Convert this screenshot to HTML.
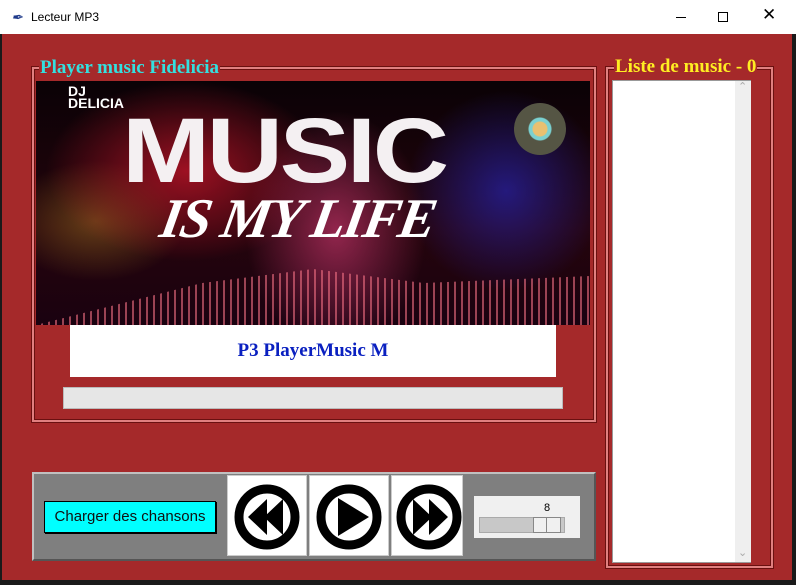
<!DOCTYPE html>
<html><head><meta charset="utf-8"><style>
*{margin:0;padding:0;box-sizing:border-box}
body{width:796px;height:585px;background:#1a1a1a;position:relative;overflow:hidden;font-family:"Liberation Sans",sans-serif}
.a{position:absolute}
.ridge{border:2px solid #e08080;box-shadow:inset 0 0 0 1px #6a1010, 0 0 0 1px #6a1010}
</style></head><body>
<div class="a" style="left:0;top:0;width:796px;height:34px;background:#fff"></div>
<div class="a" style="left:11px;top:9px;font-size:14px;color:#1e3a8a;font-style:italic">&#x2712;</div>
<div class="a" style="left:31px;top:10px;font-size:12px;color:#000">Lecteur MP3</div>
<div class="a" style="left:676px;top:17px;width:10px;height:1px;background:#000"></div>
<div class="a" style="left:718px;top:12px;width:10px;height:10px;border:1px solid #000"></div>
<div class="a" style="left:762px;top:5px;font-size:17px;color:#000">&#x2715;</div>
<div class="a" style="left:2px;top:34px;width:790px;height:546px;background:#a5292a"></div>

<!-- left frame -->
<div class="a ridge" style="left:32px;top:67px;width:564px;height:355px"></div>
<div class="a" style="left:39px;top:57px;padding:0 1px;background:#a5292a;color:#33e0e0;font:bold 19px 'Liberation Serif',serif">Player music Fidelicia</div>
<div class="a" style="left:36px;top:81px;width:554px;height:244px;overflow:hidden;background:
radial-gradient(ellipse 90px 120px at 300px 150px,rgba(220,60,120,.6),transparent),
radial-gradient(ellipse 140px 90px at 150px 90px,rgba(190,20,40,.8),transparent),
radial-gradient(ellipse 100px 100px at 470px 110px,rgba(40,40,200,.6),transparent),
radial-gradient(ellipse 90px 60px at 60px 140px,rgba(200,150,40,.4),transparent),
linear-gradient(#0a0206,#25040c 60%,#1a0210)">
  <div class="a" style="left:0;bottom:0;width:554px;height:70px;background:repeating-linear-gradient(90deg,transparent 0 5px,rgba(240,110,130,.6) 5px 7px);clip-path:polygon(0 100%,30% 40%,50% 20%,70% 40%,100% 30%,100% 100%)"></div>
  <div class="a" style="left:32px;top:4px;color:#fff;font:900 14px/12px 'Liberation Sans',sans-serif">DJ<br>DELICIA</div>
  <div class="a" style="left:86px;top:24px;color:#f4f0f2;font:900 92px/92px 'Liberation Sans',sans-serif;transform:scaleX(1.15);transform-origin:left;letter-spacing:-3px">MUSIC</div>
  <div class="a" style="left:125px;top:108px;color:#fff;font:italic bold 56px/60px 'Liberation Serif',serif;transform:skewX(-10deg);letter-spacing:-2px">IS MY LIFE</div>
  <div class="a" style="left:478px;top:22px;width:52px;height:52px;border-radius:50%;background:radial-gradient(circle,#e8c070 0 7px,#7ad0d0 8px 11px,#554 12px)"></div>
</div>
<div class="a" style="left:70px;top:325px;width:486px;height:52px;background:#fff;color:#0a20c0;font:bold 19px/52px 'Liberation Serif',serif;text-align:center">P3 PlayerMusic M</div>
<div class="a" style="left:63px;top:387px;width:500px;height:22px;background:#e6e6e6;border:1px solid #bbb"></div>

<!-- controls -->
<div class="a" style="left:32px;top:472px;width:564px;height:89px;background:#7f7f7f;border:2px solid #c0c0c0;border-right-color:#555;border-bottom-color:#555"></div>
<div class="a" style="left:44px;top:501px;width:172px;height:32px;background:#00ffff;border:1px solid #000;box-shadow:1px 1px 0 #000;font-size:15px;line-height:30px;text-align:center;color:#111">Charger des chansons</div>
<div class="a" style="left:227px;top:475px;width:80px;height:81px;background:#fff;border:1px solid #ccc"></div>
<div class="a" style="left:309px;top:475px;width:80px;height:81px;background:#fff;border:1px solid #ccc"></div>
<div class="a" style="left:391px;top:475px;width:72px;height:81px;background:#fff;border:1px solid #ccc"></div>
<svg class="a" style="left:227px;top:475px" width="240" height="81">
 <g fill="none" stroke="#000" stroke-width="9"><circle cx="40" cy="42" r="28"/><circle cx="122" cy="42" r="28"/><circle cx="202" cy="42" r="28"/></g>
 <path d="M21 42 L40 24 V60Z M37 42 L56 24 V60Z" fill="#000"/>
 <path d="M111 23 L142 42 L111 61Z" fill="#000"/>
 <path d="M186 24 L205 42 L186 60Z M202 24 L221 42 L202 60Z" fill="#000"/>
</svg>
<div class="a" style="left:474px;top:496px;width:106px;height:42px;background:#f0f0f0"></div>
<div class="a" style="left:544px;top:502px;font-size:11px;color:#000">8</div>
<div class="a" style="left:479px;top:517px;width:86px;height:16px;background:#c8c8c8;border:1px solid #aaa"></div>
<div class="a" style="left:533px;top:517px;width:28px;height:16px;background:#f0f0f0;border:1px solid #888"></div>
<div class="a" style="left:546px;top:518px;width:1px;height:14px;background:#888"></div>

<!-- right frame -->
<div class="a ridge" style="left:606px;top:67px;width:167px;height:501px"></div>
<div class="a" style="left:614px;top:56px;padding:0 1px;background:#a5292a;color:#ffee22;font:bold 19px 'Liberation Serif',serif">Liste de music - 0</div>
<div class="a" style="left:612px;top:80px;width:139px;height:483px;background:#fff;border:1px solid #999"></div>
<div class="a" style="left:735px;top:81px;width:16px;height:481px;background:#efefef"></div>
<div class="a" style="left:738px;top:80px;font-size:11px;color:#aaa">&#x2303;</div>
<div class="a" style="left:738px;top:546px;font-size:11px;color:#aaa">&#x2304;</div>
</body></html>
